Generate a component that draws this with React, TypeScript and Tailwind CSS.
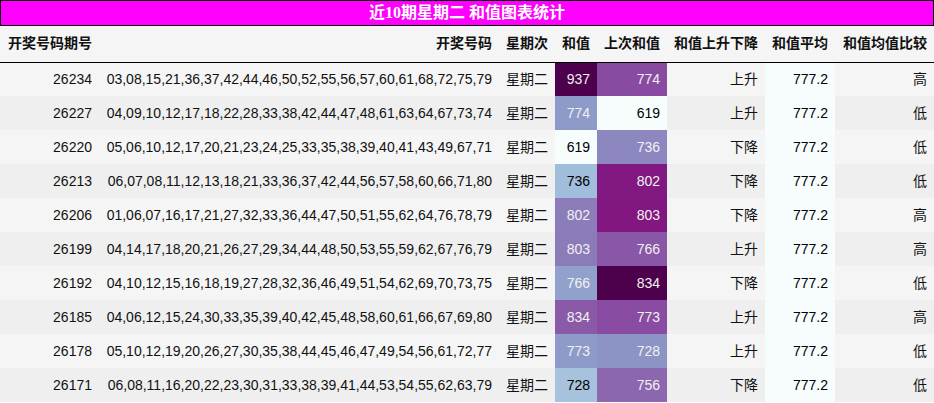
type Row = {
  issue: string;
  nums: string;
  week: string;
  sum: number;
  prev: number;
  trend: string;
  avg: string;
  cmp: string;
};

const rows: Row[] = [
  { issue: "26234", nums: "03,08,15,21,36,37,42,44,46,50,52,55,56,57,60,61,68,72,75,79", week: "星期二", sum: 937, prev: 774, trend: "上升", avg: "777.2", cmp: "高" },
  { issue: "26227", nums: "04,09,10,12,17,18,22,28,33,38,42,44,47,48,61,63,64,67,73,74", week: "星期二", sum: 774, prev: 619, trend: "上升", avg: "777.2", cmp: "低" },
  { issue: "26220", nums: "05,06,10,12,17,20,21,23,24,25,33,35,38,39,40,41,43,49,67,71", week: "星期二", sum: 619, prev: 736, trend: "下降", avg: "777.2", cmp: "低" },
  { issue: "26213", nums: "06,07,08,11,12,13,18,21,33,36,37,42,44,56,57,58,60,66,71,80", week: "星期二", sum: 736, prev: 802, trend: "下降", avg: "777.2", cmp: "低" },
  { issue: "26206", nums: "01,06,07,16,17,21,27,32,33,36,44,47,50,51,55,62,64,76,78,79", week: "星期二", sum: 802, prev: 803, trend: "下降", avg: "777.2", cmp: "高" },
  { issue: "26199", nums: "04,14,17,18,20,21,26,27,29,34,44,48,50,53,55,59,62,67,76,79", week: "星期二", sum: 803, prev: 766, trend: "上升", avg: "777.2", cmp: "高" },
  { issue: "26192", nums: "04,10,12,15,16,18,19,27,28,32,36,46,49,51,54,62,69,70,73,75", week: "星期二", sum: 766, prev: 834, trend: "下降", avg: "777.2", cmp: "低" },
  { issue: "26185", nums: "04,06,12,15,24,30,33,35,39,40,42,45,48,58,60,61,66,67,69,80", week: "星期二", sum: 834, prev: 773, trend: "上升", avg: "777.2", cmp: "高" },
  { issue: "26178", nums: "05,10,12,19,20,26,27,30,35,38,44,45,46,47,49,54,56,61,72,77", week: "星期二", sum: 773, prev: 728, trend: "上升", avg: "777.2", cmp: "低" },
  { issue: "26171", nums: "06,08,11,16,20,22,23,30,31,33,38,39,41,44,53,54,55,62,63,79", week: "星期二", sum: 728, prev: 756, trend: "下降", avg: "777.2", cmp: "低" },
];

// BuPu colour stops
const BUPU: [number, number, number][] = [
  [247, 252, 253],
  [224, 236, 244],
  [191, 211, 230],
  [158, 188, 218],
  [140, 150, 198],
  [140, 107, 177],
  [136, 65, 157],
  [129, 15, 124],
  [77, 0, 75],
];

function bupu(t: number): [number, number, number] {
  const x = Math.min(1, Math.max(0, t)) * (BUPU.length - 1);
  const i = Math.min(BUPU.length - 2, Math.floor(x));
  const f = x - i;
  const a = BUPU[i];
  const b = BUPU[i + 1];
  return [0, 1, 2].map((k) => Math.round(a[k] + (b[k] - a[k]) * f)) as [number, number, number];
}

function luminance([r, g, b]: [number, number, number]) {
  const lin = (v: number) => {
    const c = v / 255;
    return c <= 0.04045 ? c / 12.92 : ((c + 0.055) / 1.055) ** 2.4;
  };
  return 0.2126 * lin(r) + 0.7152 * lin(g) + 0.0722 * lin(b);
}

function heat(v: number, min: number, max: number) {
  const rgb = bupu((v - min) / (max - min));
  return {
    backgroundColor: `rgb(${rgb[0]},${rgb[1]},${rgb[2]})`,
    color: luminance(rgb) < 0.408 ? "#f1f1f1" : "#000000",
  };
}

const sums = rows.map((r) => r.sum);
const prevs = rows.map((r) => r.prev);
const sMin = Math.min(...sums);
const sMax = Math.max(...sums);
const pMin = Math.min(...prevs);
const pMax = Math.max(...prevs);

const cell = "h-[34px] px-[7px] py-0 text-right whitespace-nowrap";
const head = "h-[36px] px-[7px] py-0 text-right font-bold whitespace-nowrap";

export default function App() {
  return (
    <div className="w-[934px] bg-white font-['Liberation_Sans','Noto_Sans_CJK_SC',sans-serif] text-[14px] text-[#111]">
      <div className="flex h-[26px] items-center justify-center border border-black bg-[#ff00ff] font-['Liberation_Serif','Noto_Sans_CJK_SC',serif] text-[16px] font-bold text-white">
        近10期星期二 和值图表统计
      </div>
      <table className="w-[934px] table-fixed border-collapse">
        <colgroup>
          <col className="w-[99px]" />
          <col className="w-[400px]" />
          <col className="w-[56px]" />
          <col className="w-[42px]" />
          <col className="w-[70px]" />
          <col className="w-[98px]" />
          <col className="w-[70px]" />
          <col className="w-[99px]" />
        </colgroup>
        <thead>
          <tr className="border-b border-black bg-[#f5f5f5]">
            <th className={`${head} !text-left px-[8px]`}>开奖号码期号</th>
            <th className={head}>开奖号码</th>
            <th className={head}>星期次</th>
            <th className={head}>和值</th>
            <th className={head}>上次和值</th>
            <th className={head}>和值上升下降</th>
            <th className={head}>和值平均</th>
            <th className={head}>和值均值比较</th>
          </tr>
        </thead>
        <tbody>
          {rows.map((r, i) => (
            <tr key={r.issue} className={i % 2 === 0 ? "bg-[#f5f5f5]" : "bg-[#efefef]"}>
              <td className={cell}>{r.issue}</td>
              <td className={cell}>{r.nums}</td>
              <td className={cell}>{r.week}</td>
              <td className={cell} style={heat(r.sum, sMin, sMax)}>
                {r.sum}
              </td>
              <td className={cell} style={heat(r.prev, pMin, pMax)}>
                {r.prev}
              </td>
              <td className={cell}>{r.trend}</td>
              <td className={`${cell} bg-[#f7fcfd] text-black`}>{r.avg}</td>
              <td className={cell}>{r.cmp}</td>
            </tr>
          ))}
        </tbody>
      </table>
    </div>
  );
}
